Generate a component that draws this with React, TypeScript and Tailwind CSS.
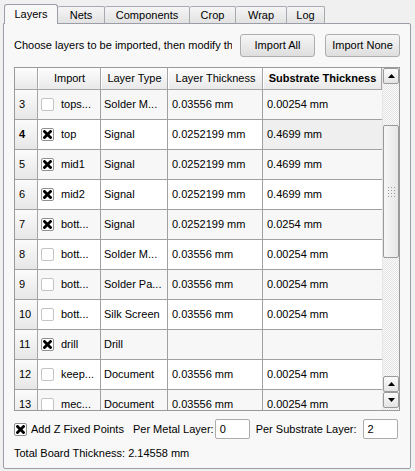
import React from 'react';

type Row = {
  n: number;
  checked: boolean;
  name: string;
  type: string;
  thick: string;
  sub: string;
};

const rows: Row[] = [
  { n: 3, checked: false, name: 'tops...', type: 'Solder M...', thick: '0.03556 mm', sub: '0.00254 mm' },
  { n: 4, checked: true, name: 'top', type: 'Signal', thick: '0.0252199 mm', sub: '0.4699 mm' },
  { n: 5, checked: true, name: 'mid1', type: 'Signal', thick: '0.0252199 mm', sub: '0.4699 mm' },
  { n: 6, checked: true, name: 'mid2', type: 'Signal', thick: '0.0252199 mm', sub: '0.4699 mm' },
  { n: 7, checked: true, name: 'bott...', type: 'Signal', thick: '0.0252199 mm', sub: '0.0254 mm' },
  { n: 8, checked: false, name: 'bott...', type: 'Solder M...', thick: '0.03556 mm', sub: '0.00254 mm' },
  { n: 9, checked: false, name: 'bott...', type: 'Solder Pa...', thick: '0.03556 mm', sub: '0.00254 mm' },
  { n: 10, checked: false, name: 'bott...', type: 'Silk Screen', thick: '0.03556 mm', sub: '0.00254 mm' },
  { n: 11, checked: true, name: 'drill', type: 'Drill', thick: '', sub: '' },
  { n: 12, checked: false, name: 'keep...', type: 'Document', thick: '0.03556 mm', sub: '0.00254 mm' },
  { n: 13, checked: false, name: 'mec...', type: 'Document', thick: '0.03556 mm', sub: '0.00254 mm' },
];

const tabs = ['Nets', 'Components', 'Crop', 'Wrap', 'Log'];
const tabWidths = ['w-[47px]', 'w-[85px]', 'w-[46px]', 'w-[51px]', 'w-[38px]'];

function Check({ checked }: { checked: boolean }) {
  return (
    <span
      className={`w-[13px] h-[13px] shrink-0 flex items-center justify-center rounded-[2px] border bg-white ${
        checked ? 'border-[#8e8f8f]' : 'border-[#c4c4c4]'
      }`}
    >
      {checked && (
        <svg width="9" height="9" viewBox="0 0 9 9">
          <path d="M1.5 1.5 L7.5 7.5 M7.5 1.5 L1.5 7.5" stroke="#000" strokeWidth="2.8" strokeLinecap="square" />
        </svg>
      )}
    </span>
  );
}

function Arrow({ up }: { up: boolean }) {
  return (
    <div className="h-[16px] shrink-0 rounded-[2px] border border-[#9a9a9a] bg-gradient-to-b from-[#fbfbfb] to-[#e4e4e4] flex items-center justify-center">
      <svg width="7" height="4" viewBox="0 0 7 4">
        <path d={up ? 'M0 4 L3.5 0 L7 4 Z' : 'M0 0 L3.5 4 L7 0 Z'} fill="#000" />
      </svg>
    </div>
  );
}

function HeaderCell({ children, className = '' }: { children?: React.ReactNode; className?: string }) {
  return (
    <div
      className={`h-full flex items-center justify-center whitespace-nowrap border-r border-[#a5a5a5] border-l border-l-white bg-gradient-to-b from-[#fdfdfd] to-[#e9e9e9] ${className}`}
    >
      {children}
    </div>
  );
}

const track = '[background:repeating-conic-gradient(#e4e4e4_0_25%,#fbfbfb_0_50%)_0_0/2px_2px]';

export default function App() {
  return (
    <div
      className="w-[415px] h-[471px] bg-[#f0f0f0] pt-[3px] pl-[3px] text-[11px] text-black overflow-hidden"
      style={{ fontFamily: '"Liberation Sans", Arial, sans-serif' }}
    >
      {/* Tabs */}
      <div className="flex items-end h-[20px] pl-[1px] relative z-10">
        <div className="w-[54px] h-[20px] -mb-[1px] border border-b-0 border-[#9b9ea6] rounded-t-[3px] bg-[#f8f8f8] flex items-center justify-center pb-[1px]">
          Layers
        </div>
        {tabs.map((t, i) => (
          <div
            key={t}
            className={`${tabWidths[i]} h-[17px] border border-l-0 border-b-0 border-[#a7aab1] rounded-t-[2px] bg-gradient-to-b from-[#f5f5f5] to-[#e2e2e2] flex items-center justify-center pt-[1px]`}
          >
            {t}
          </div>
        ))}
      </div>

      {/* Panel */}
      <div className="w-[408px] h-[446px] border border-[#9b9ea6] bg-[#f8f8f8] rounded-b-[2px] rounded-tr-[2px] px-[10px] pt-[10px] flex flex-col">
        <div className="flex items-center h-[23px]">
          <div className="w-[218px] overflow-hidden whitespace-nowrap">Choose layers to be imported, then modify th</div>
          <button className="ml-[8px] w-[75px] h-[23px] rounded-[3px] border border-[#adadad] bg-gradient-to-b from-[#f6f6f6] to-[#dedede]">
            Import All
          </button>
          <button className="ml-[10px] w-[75px] h-[23px] rounded-[3px] border border-[#adadad] bg-gradient-to-b from-[#f6f6f6] to-[#dedede]">
            Import None
          </button>
        </div>

        {/* Table */}
        <div className="mt-[10px] w-[386px] h-[344px] border border-[#9a9a9a] flex bg-white overflow-hidden">
          <div className="w-[367px] flex flex-col overflow-hidden">
            <div className="h-[22px] shrink-0 grid grid-cols-[23px_63px_67px_95px_119px] border-b border-[#a5a5a5]">
              <HeaderCell className="border-l-0" />
              <HeaderCell>Import</HeaderCell>
              <HeaderCell>Layer Type</HeaderCell>
              <HeaderCell>Layer Thickness</HeaderCell>
              <HeaderCell className="font-bold">Substrate Thickness</HeaderCell>
            </div>
            {rows.map((r) => {
              const bg = r.n % 2 === 1 ? 'bg-[#f7f7f7]' : 'bg-white';
              return (
                <div key={r.n} className="h-[30px] shrink-0 grid grid-cols-[23px_63px_67px_95px_119px] border-b border-[#a0a0a0]">
                  <div
                    className={`h-full flex items-center pl-[4px] border-r border-[#a5a5a5] bg-gradient-to-b from-[#fbfbfb] to-[#e7e7e7] ${
                      r.n === 4 ? 'font-bold' : ''
                    }`}
                  >
                    {r.n}
                  </div>
                  <div className={`h-full flex items-center gap-[7px] pl-[3px] border-r border-[#a0a0a0] whitespace-nowrap ${bg}`}>
                    <Check checked={r.checked} />
                    <span>{r.name}</span>
                  </div>
                  <div className={`h-full flex items-center pl-[3px] border-r border-[#a0a0a0] whitespace-nowrap ${bg}`}>{r.type}</div>
                  <div className={`h-full flex items-center pl-[4px] border-r border-[#a0a0a0] whitespace-nowrap ${bg}`}>{r.thick}</div>
                  <div className={`h-full flex items-center pl-[4px] whitespace-nowrap ${r.n === 4 ? 'bg-[#efefef]' : bg}`}>{r.sub}</div>
                </div>
              );
            })}
          </div>

          {/* Scrollbar */}
          <div className={`w-[17px] h-full flex flex-col border-l border-[#e6e6e6] ${track}`}>
            <Arrow up />
            <div className="h-[41px] shrink-0" />
            <div className="h-[133px] shrink-0 rounded-[2px] border border-[#9a9a9a] bg-gradient-to-r from-[#f7f7f7] to-[#e6e6e6] flex items-center justify-center">
              <div className="grid grid-cols-3 gap-[2px]">
                {Array.from({ length: 12 }).map((_, i) => (
                  <span key={i} className="w-[1px] h-[1px] bg-[#9b9b9b]" />
                ))}
              </div>
            </div>
            <div className="flex-1" />
            <Arrow up />
            <Arrow up={false} />
            <div className="h-[2px] shrink-0" />
          </div>
        </div>

        {/* Bottom controls */}
        <div className="mt-[8px] flex items-center h-[20px] whitespace-nowrap">
          <Check checked />
          <span className="ml-[4px] shrink-0">Add Z Fixed Points</span>
          <span className="ml-[9px] shrink-0">Per Metal Layer:</span>
          <div className="ml-[1px] shrink-0 w-[35px] h-[20px] border border-[#acacac] rounded-[2px] bg-white flex items-center pl-[4px]">0</div>
          <span className="ml-[6px] shrink-0">Per Substrate Layer:</span>
          <div className="ml-[6px] shrink-0 w-[35px] h-[20px] border border-[#acacac] rounded-[2px] bg-white flex items-center pl-[4px]">2</div>
        </div>
        <div className="mt-[6px] whitespace-nowrap">Total Board Thickness: 2.14558 mm</div>
      </div>
    </div>
  );
}
